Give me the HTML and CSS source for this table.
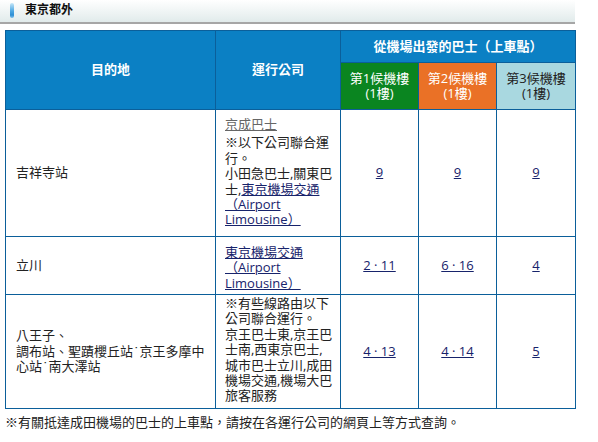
FILE: index.html
```html
<!DOCTYPE html>
<html lang="zh-Hant">
<head>
<meta charset="utf-8">
<title>東京都外</title>
<link rel="stylesheet" href="styles.css">
</head>
<body>
<div class="section-title"><span class="accent"></span><h2>東京都外</h2></div>
<table class="bus">
  <colgroup>
    <col class="c-dest"><col class="c-op"><col class="c-t"><col class="c-t"><col class="c-t3">
  </colgroup>
  <thead>
    <tr class="h1">
      <th rowspan="2">目的地</th>
      <th rowspan="2">運行公司</th>
      <th colspan="3">從機場出發的巴士（上車點）</th>
    </tr>
    <tr class="h2">
      <th class="t1">第1候機樓<br>(1樓)</th>
      <th class="t2">第2候機樓<br>(1樓)</th>
      <th class="t3">第3候機樓<br>(1樓)</th>
    </tr>
  </thead>
  <tbody>
    <tr class="r1">
      <td class="dest">吉祥寺站</td>
      <td class="op op1"><p class="main"><a class="visited" href="#">京成巴士</a></p><p>※以下公司聯合運<br>行。<br>小田急巴士,關東巴<br>士,<a href="#">東京機場交通<br>（Airport<br>Limousine）</a></p></td>
      <td class="num"><a href="#">9</a></td>
      <td class="num"><a href="#">9</a></td>
      <td class="num"><a href="#">9</a></td>
    </tr>
    <tr class="r2">
      <td class="dest">立川</td>
      <td class="op op2"><p><a href="#">東京機場交通<br>（Airport<br>Limousine）</a></p></td>
      <td class="num"><a href="#">2 · 11</a></td>
      <td class="num"><a href="#">6 · 16</a></td>
      <td class="num"><a href="#">4</a></td>
    </tr>
    <tr class="r3">
      <td class="dest">八王子、<br>調布站、聖蹟櫻丘站<span class="dot">˙</span>京王多摩中<br>心站<span class="dot">˙</span>南大澤站</td>
      <td class="op op3"><p>※有些線路由以下<br>公司聯合運行。<br>京王巴士東,京王巴<br>士南,西東京巴士,<br>城市巴士立川,成田<br>機場交通,機場大巴<br>旅客服務</p></td>
      <td class="num"><a href="#">4 · 13</a></td>
      <td class="num"><a href="#">4 · 14</a></td>
      <td class="num"><a href="#">5</a></td>
    </tr>
  </tbody>
</table>
<p class="footnote">※有關抵達成田機場的巴士的上車點，請按在各運行公司的網頁上等方式查詢。</p>
</body>
</html>
```
FILE: styles.css
```css
* { box-sizing: border-box; }

body {
  margin: 0;
  background: #fff;
  color: #222;
  font-family: "Open Sans", "Noto Sans CJK TC", sans-serif;
  font-size: 13px;
  line-height: 15.4px;
}

p { margin: 0; }

.section-title {
  width: 575px;
  height: 24px;
  display: flex;
  align-items: flex-start;
  gap: 11px;
  padding-left: 10px;
  background: linear-gradient(to bottom, #ffffff 0%, #f3f7f7 40%, #e1ebeb 100%);
  border-bottom: 2px solid #a6a6a6;
}

.accent {
  width: 4px;
  height: 15px;
  margin-top: 3px;
  border-radius: 2px;
  background: linear-gradient(to bottom, #c4e6f8 0%, #4aa6e2 55%, #2f8fd4 80%, #7cc0ec 100%);
}

.section-title h2 {
  margin: 2px 0 0;
  font-size: 12px;
  line-height: 14px;
  font-weight: bold;
  color: #111;
  font-family: "Noto Sans CJK TC", sans-serif;
}

.bus {
  border-collapse: collapse;
  table-layout: fixed;
  width: 570px;
  margin: 6px 0 0 5px;
}

.c-dest { width: 210px; }
.c-op { width: 125px; }
.c-t { width: 78px; }
.c-t3 { width: 79px; }

.bus th,
.bus td {
  border: 1px solid #0b5f9a;
  padding: 0;
}

.bus th {
  background: #0b80c4;
  color: #fff;
  text-align: center;
  vertical-align: middle;
  font-weight: bold;
}

.bus tr.h1 { height: 32px; }
.bus tr.h2 { height: 47px; }
.bus tr.r1 { height: 127px; }
.bus tr.r2 { height: 58px; }
.bus tr.r3 { height: 114px; }

.bus .h2 th { font-weight: normal; line-height: 15px; }
.bus th.t1 { background: #0a8520; }
.bus th.t2 { background: #ea7126; }
.bus th.t3 { background: #a9d8e0; color: #222; }

.bus td.dest {
  padding: 0 10px;
  vertical-align: middle;
}

.dot {
  font-family: "DejaVu Sans", sans-serif;
}

.bus td.op {
  vertical-align: top;
  padding: 0 4px 0 9px;
}
.bus td.op1 { padding-top: 7px; }
.bus td.op2 { padding-top: 8px; }
.bus td.op3 { padding-top: 1px; }

.op .main { margin-bottom: 3px; }

.bus td.num {
  text-align: center;
  vertical-align: middle;
  white-space: nowrap;
}

a {
  color: #17236b;
  text-decoration: underline;
}

a.visited { color: #666; }

.footnote {
  margin: 6px 0 0 5px;
}
```
